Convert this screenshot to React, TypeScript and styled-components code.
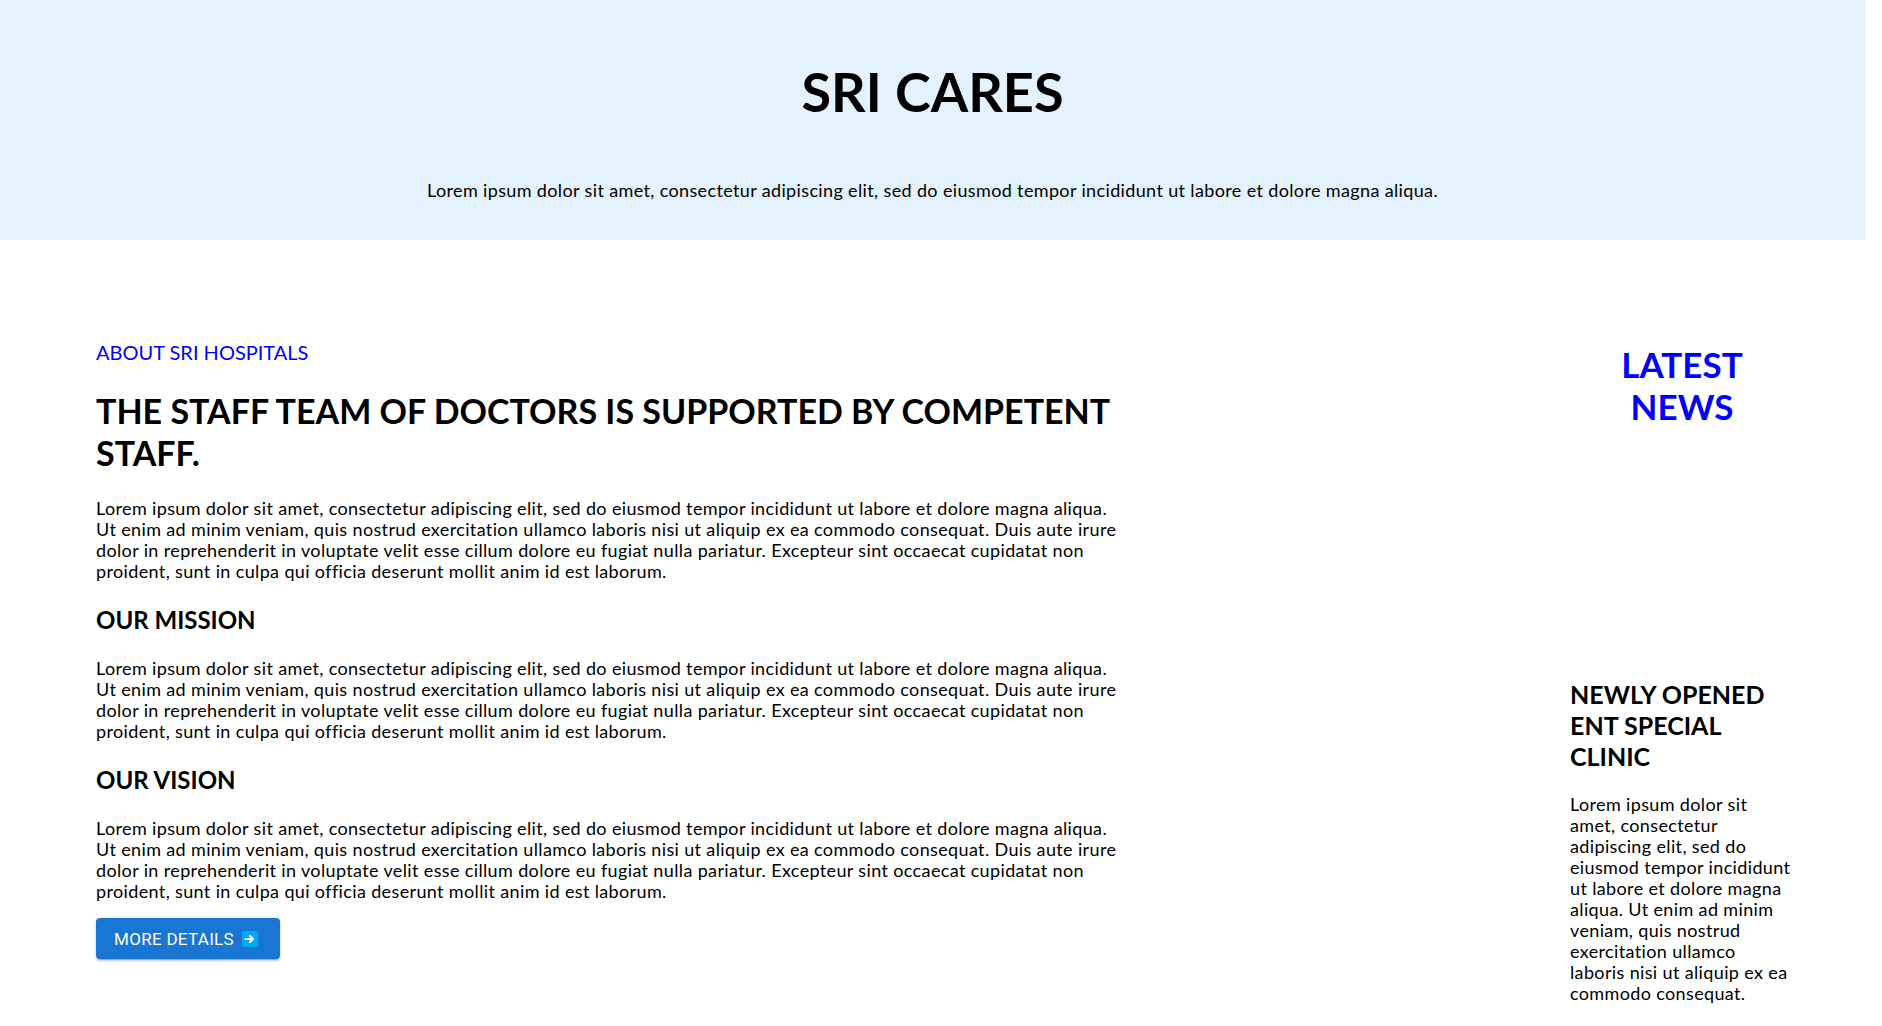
import * as React from 'react';
import styled, { createGlobalStyle } from 'styled-components';

const GlobalStyle = createGlobalStyle`
  body {
    margin: 0;
    font-family: 'Lato', 'Open Sans', sans-serif;
    color: #000;
    background: #fff;
  }
`;

const lorem =
  'Lorem ipsum dolor sit amet, consectetur adipiscing elit, sed do eiusmod tempor incididunt ut labore et dolore magna aliqua. Ut enim ad minim veniam, quis nostrud exercitation ullamco laboris nisi ut aliquip ex ea commodo consequat. Duis aute irure dolor in reprehenderit in voluptate velit esse cillum dolore eu fugiat nulla pariatur. Excepteur sint occaecat cupidatat non proident, sunt in culpa qui officia deserunt mollit anim id est laborum.';

const Page = styled.div`
  width: 1865px;
`;

const Hero = styled.header`
  background: #e3f2fd;
  height: 240px;
  display: flex;
  flex-direction: column;
  align-items: center;
  padding-top: 56px;
  box-sizing: border-box;
  h1 {
    margin: 0;
    font-size: 54px;
    font-weight: 700;
    line-height: 72px;
  }
  p {
    margin: 52px 0 0;
    font-size: 18px;
    line-height: 21px;
    letter-spacing: 0.36px;
  }
`;

const Main = styled.main`
  display: flex;
  justify-content: space-between;
  padding: 100px 71px 40px 96px;
`;

const About = styled.section`
  width: 1028px;
`;

const Eyebrow = styled.div`
  color: #0000ff;
  font-size: 20px;
  line-height: 24px;
`;

const Title = styled.h2`
  margin: 26px 0 0;
  font-size: 34px;
  line-height: 42px;
  font-weight: 700;
`;

const SubTitle = styled.h3`
  margin: 24px 0 0;
  font-size: 24px;
  line-height: 28px;
  font-weight: 700;
`;

const Para = styled.p`
  margin: 24px 0 0;
  font-size: 18px;
  line-height: 21px;
  letter-spacing: 0.36px;
`;

const Button = styled.button`
  margin-top: 16px;
  display: inline-flex;
  align-items: center;
  gap: 8px;
  height: 41px;
  padding: 0 22px 0 18px;
  border: none;
  border-radius: 4px;
  background: #1976d2;
  color: #fff;
  font-family: Roboto, sans-serif;
  font-size: 17px;
  font-weight: 400;
  text-transform: uppercase;
  letter-spacing: 0.3px;
  box-shadow: 0 3px 1px -2px rgba(0, 0, 0, 0.2), 0 2px 2px 0 rgba(0, 0, 0, 0.14),
    0 1px 5px 0 rgba(0, 0, 0, 0.12);
  cursor: pointer;
`;

const News = styled.aside`
  width: 224px;
  display: flex;
  flex-direction: column;
`;

const NewsTitle = styled.h2`
  margin: 3px 0 0;
  color: #0000ff;
  text-align: center;
  font-size: 35px;
  line-height: 42px;
  font-weight: 700;
`;

const NewsItem = styled.article`
  margin-top: 252px;
  h3 {
    margin: 0;
    font-size: 25px;
    line-height: 31px;
    font-weight: 700;
  }
  p {
    margin: 22px 0 0;
    font-size: 18px;
    line-height: 21px;
    letter-spacing: 0.36px;
  }
`;

const ArrowIcon = () => (
  <svg width="16" height="16" viewBox="0 0 16 16">
    <rect width="16" height="16" rx="2" fill="#03a9f4" />
    <path d="M3.5 8h7M8 5l3 3-3 3" stroke="#fff" strokeWidth="2" fill="none" strokeLinecap="round" strokeLinejoin="round" />
  </svg>
);

export default function App() {
  return (
    <Page>
      <GlobalStyle />
      <Hero>
        <h1>SRI CARES</h1>
        <p>Lorem ipsum dolor sit amet, consectetur adipiscing elit, sed do eiusmod tempor incididunt ut labore et dolore magna aliqua.</p>
      </Hero>
      <Main>
        <About>
          <Eyebrow>ABOUT SRI HOSPITALS</Eyebrow>
          <Title>THE STAFF TEAM OF DOCTORS IS SUPPORTED BY COMPETENT STAFF.</Title>
          <Para>{lorem}</Para>
          <SubTitle>OUR MISSION</SubTitle>
          <Para>{lorem}</Para>
          <SubTitle>OUR VISION</SubTitle>
          <Para>{lorem}</Para>
          <Button>
            More Details <ArrowIcon />
          </Button>
        </About>
        <News>
          <NewsTitle>LATEST NEWS</NewsTitle>
          <NewsItem>
            <h3>NEWLY OPENED ENT SPECIAL CLINIC</h3>
            <p>
              Lorem ipsum dolor sit amet, consectetur adipiscing elit, sed do eiusmod tempor incididunt ut labore et dolore
              magna aliqua. Ut enim ad minim veniam, quis nostrud exercitation ullamco laboris nisi ut aliquip ex ea commodo
              consequat.
            </p>
          </NewsItem>
        </News>
      </Main>
    </Page>
  );
}
